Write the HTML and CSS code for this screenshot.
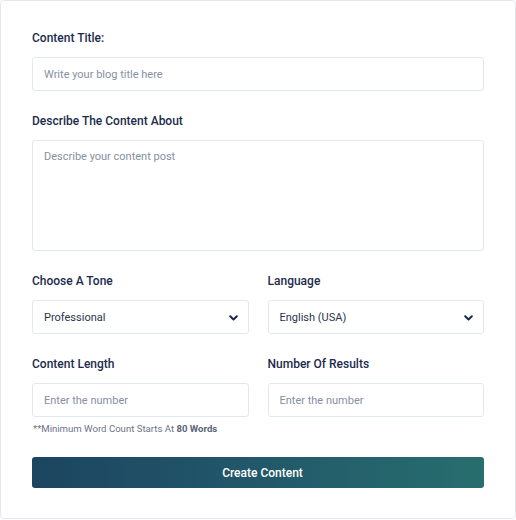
FILE: index.html
```html
<!DOCTYPE html>
<html>
<head>
<meta charset="utf-8">
<link rel="stylesheet" href="styles.css">
</head>
<body>
<div class="card">
  <div class="field">
    <label class="label">Content Title:</label>
    <div class="input"><span class="ph">Write your blog title here</span></div>
  </div>
  <div class="field">
    <label class="label">Describe The Content About</label>
    <div class="input textarea"><span class="ph">Describe your content post</span></div>
  </div>
  <div class="row">
    <div class="field">
      <label class="label">Choose A Tone</label>
      <div class="input select"><span class="val">Professional</span>
        <svg class="chev" width="9" height="6" viewBox="0 0 9 6"><path d="M1.2 1.2 L4.5 4.5 L7.8 1.2" fill="none" stroke="#1b2a4a" stroke-width="2" stroke-linecap="round" stroke-linejoin="round"/></svg>
      </div>
    </div>
    <div class="field">
      <label class="label">Language</label>
      <div class="input select"><span class="val">English (USA)</span>
        <svg class="chev" width="9" height="6" viewBox="0 0 9 6"><path d="M1.2 1.2 L4.5 4.5 L7.8 1.2" fill="none" stroke="#1b2a4a" stroke-width="2" stroke-linecap="round" stroke-linejoin="round"/></svg>
      </div>
    </div>
  </div>
  <div class="row">
    <div class="field">
      <label class="label">Content Length</label>
      <div class="input"><span class="ph">Enter the number</span></div>
      <p class="note">**Minimum Word Count Starts At <b>80 Words</b></p>
    </div>
    <div class="field">
      <label class="label">Number Of Results</label>
      <div class="input"><span class="ph">Enter the number</span></div>
    </div>
  </div>
  <button class="btn">Create Content</button>
</div>
</body>
</html>
```
FILE: styles.css
```css
* { box-sizing: border-box; }
html, body { margin: 0; padding: 0; background: #ffffff; }
body { font-family: Roboto, "Liberation Sans", sans-serif; }
.card {
  width: 516px;
  height: 519px;
  border: 1px solid #e4e8ee;
  border-radius: 4px;
  padding: 29px 31px 0 31px;
  display: flex;
  flex-direction: column;
  gap: 22px;
  background: #fff;
}
.field { display: flex; flex-direction: column; }
.label {
  font-size: 12px;
  line-height: 16px;
  font-weight: 500;
  color: #1c2b4c;
  margin-bottom: 11px;
}
.input {
  height: 34px;
  border: 1px solid #e3e8ee;
  border-radius: 3px;
  padding: 0 11px;
  display: flex;
  align-items: center;
  font-size: 11px;
}
.textarea {
  height: 111px;
  align-items: flex-start;
  padding-top: 9px;
}
.ph { color: #8690a3; }
.val { color: #2a3550; flex: 1; }
.select { justify-content: space-between; padding-right: 10px; }
.chev { margin-top: 1px; }
.row {
  display: grid;
  grid-template-columns: 1fr 1fr;
  column-gap: 19px;
}
.note {
  margin: 6px 0 0 1px;
  font-size: 9.6px;
  line-height: 12px;
  color: #6b7487;
}
.note b { font-weight: 700; color: #5a6477; }
.btn {
  margin-top: 0;
  height: 31px;
  border: none;
  border-radius: 3px;
  padding: 0 0 0 9px;
  background: linear-gradient(90deg, #1c4560 0%, #22586a 50%, #276e6e 100%);
  color: #fff;
  font-family: Roboto, "Liberation Sans", sans-serif;
  font-size: 12px;
  font-weight: 500;
}
```
